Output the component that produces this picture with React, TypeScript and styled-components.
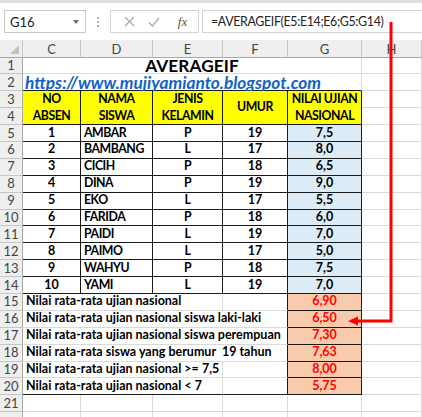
import React from 'react';
import styled, { createGlobalStyle } from 'styled-components';

const GlobalStyle = createGlobalStyle`
  html, body { margin: 0; padding: 0; background: #ffffff; }
  body { font-family: Lato, "Liberation Sans", sans-serif; overflow: hidden; }
  * { box-sizing: border-box; }
`;

const GRID = '#d9d9d9';
const HEAD_LINE = '#c6c6c6';
const BLACK = '#1a1a1a';

const Page = styled.div`
  position: relative;
  width: 422px;
  height: 417px;
  overflow: hidden;
`;

const FormulaBar = styled.div`
  height: 40px;
  border-top: 3px solid #e1e1e1;
  background: #ffffff;
  display: flex;
  align-items: flex-start;
  padding: 7px 0 0 4px;
`;

const NameBox = styled.div`
  width: 82px;
  height: 23px;
  border: 1px solid #c8c8c8;
  display: flex;
  align-items: center;
  justify-content: space-between;
  padding: 0 5px 0 5px;
  font-size: 13px;
  color: #222;
`;

const Caret = styled.span`
  width: 0;
  height: 0;
  border-left: 3.5px solid transparent;
  border-right: 3.5px solid transparent;
  border-top: 4px solid #6b6b6b;
  margin-right: 1px;
`;

const Dots = styled.div`
  width: 24px;
  height: 23px;
  display: flex;
  flex-direction: column;
  align-items: center;
  justify-content: center;
  gap: 2px;
  & > span {
    width: 2px;
    height: 2px;
    background: #b0b0b0;
  }
`;

const FxBox = styled.div`
  width: 89px;
  height: 23px;
  border: 1px solid #d4d4d4;
  display: flex;
  align-items: center;
  justify-content: space-around;
  padding: 0 4px 0 6px;
  color: #a8a8a8;
`;

const FxText = styled.span`
  font-family: "Liberation Serif", serif;
  font-style: italic;
  font-size: 13px;
  color: #555;
  margin-left: 4px;
`;

const FormulaInput = styled.div`
  flex: 1;
  height: 23px;
  margin-left: 3px;
  border: 1px solid #d4d4d4;
  border-right: none;
  display: flex;
  align-items: center;
  padding-left: 8px;
  font-size: 12.4px;
  letter-spacing: -0.35px;
  color: #222;
  white-space: nowrap;
`;

const Sheet = styled.div`
  display: grid;
  grid-template-columns: 23px 58px 72px 70px 65px 74px 60px;
  grid-template-rows: 17.5px repeat(22, 16.9px);
`;

const Corner = styled.div`
  grid-column: 1;
  grid-row: 1;
  background: #efefef;
  border-right: 1px solid ${HEAD_LINE};
  border-bottom: 1px solid #a8a8a8;
  position: relative;
  &::after {
    content: '';
    position: absolute;
    right: 3px;
    bottom: 3px;
    border-left: 9px solid transparent;
    border-bottom: 9px solid #c1c1c1;
  }
`;

const ColHead = styled.div<{ $col: number }>`
  grid-column: ${(p) => p.$col};
  grid-row: 1;
  background: #efefef;
  border-right: 1px solid ${HEAD_LINE};
  border-bottom: 1px solid #a8a8a8;
  display: flex;
  align-items: center;
  justify-content: center;
  font-size: 13px;
  line-height: 1;
  color: #444;
  padding-top: 2px;
`;

const RowHead = styled.div<{ $row: number }>`
  grid-column: 1;
  grid-row: ${(p) => p.$row};
  background: #efefef;
  border-right: 1px solid #a8a8a8;
  border-bottom: 1px solid ${HEAD_LINE};
  display: flex;
  align-items: center;
  justify-content: center;
  font-size: 13px;
  line-height: 1;
  color: #444;
`;

type CellProps = {
  $col: number;
  $row: number;
  $colSpan?: number;
  $rowSpan?: number;
  $bg?: string;
  $rb?: string;
  $bb?: string;
  $align?: 'left' | 'center';
  $color?: string;
  $caps?: boolean;
};

const Cell = styled.div<CellProps>`
  grid-column: ${(p) => p.$col} / span ${(p) => p.$colSpan ?? 1};
  grid-row: ${(p) => p.$row} / span ${(p) => p.$rowSpan ?? 1};
  background: ${(p) => p.$bg ?? '#ffffff'};
  border-right: 1px solid ${(p) => p.$rb ?? GRID};
  border-bottom: 1px solid ${(p) => p.$bb ?? GRID};
  display: flex;
  flex-direction: column;
  align-items: ${(p) => (p.$align === 'left' ? 'flex-start' : 'center')};
  justify-content: center;
  text-align: ${(p) => p.$align ?? 'center'};
  padding: 0 3px;
  font-weight: 700;
  font-size: ${(p) => (p.$caps ? '12.3px' : '12.5px')};
  letter-spacing: ${(p) => (p.$caps ? '-0.45px' : '0')};
  line-height: 16.9px;
  color: ${(p) => p.$color ?? '#000'};
  white-space: pre;
  overflow: visible;
`;

const Title = styled.span`
  font-size: 17.2px;
  line-height: 15px;
  font-weight: 700;
  letter-spacing: 0.1px;
`;

const Link = styled.span`
  font-size: 17.3px;
  line-height: 15px;
  font-style: italic;
  font-weight: 700;
  color: #1162c8;
  margin-left: -1px;
`;

const Arrow = styled.svg`
  position: absolute;
  left: 0;
  top: 0;
  pointer-events: none;
`;

const students: [string, string, string, string, string][] = [
  ['1', 'AMBAR', 'P', '19', '7,5'],
  ['2', 'BAMBANG', 'L', '17', '8,0'],
  ['3', 'CICIH', 'P', '18', '6,5'],
  ['4', 'DINA', 'P', '19', '9,0'],
  ['5', 'EKO', 'L', '17', '5,5'],
  ['6', 'FARIDA', 'P', '18', '6,0'],
  ['7', 'PAIDI', 'L', '19', '7,0'],
  ['8', 'PAIMO', 'L', '17', '5,0'],
  ['9', 'WAHYU', 'P', '18', '7,5'],
  ['10', 'YAMI', 'L', '19', '7,0'],
];

const summary: [string, string, number][] = [
  ['Nilai rata-rata ujian nasional', '6,90', 3],
  ['Nilai rata-rata ujian nasional siswa laki-laki', '6,50', 4],
  ['Nilai rata-rata ujian nasional siswa perempuan', '7,30', 4],
  ['Nilai rata-rata siswa yang berumur  19 tahun', '7,63', 4],
  ['Nilai rata-rata ujian nasional >= 7,5', '8,00', 3],
  ['Nilai rata-rata ujian nasional < 7', '5,75', 3],
];

const headers: [string, number][] = [
  ['NO\nABSEN', 2],
  ['NAMA\nSISWA', 3],
  ['JENIS\nKELAMIN', 4],
  ['UMUR', 5],
  ['NILAI UJIAN\nNASIONAL', 6],
];

const cols = ['C', 'D', 'E', 'F', 'G', 'H'];

export default function App() {
  const cells: React.ReactNode[] = [];
  const gr = (r: number) => r + 1;

  for (let r = 1; r <= 22; r++) {
    cells.push(
      <RowHead key={`rh${r}`} $row={gr(r)}>
        {r <= 21 ? r : ''}
      </RowHead>
    );
    cells.push(<Cell key={`h${r}`} $col={7} $row={gr(r)} />);
  }

  cells.push(
    <Cell key="title" $col={2} $colSpan={5} $row={gr(1)}>
      <Title>AVERAGEIF</Title>
    </Cell>
  );
  cells.push(
    <Cell key="link" $col={2} $colSpan={5} $row={gr(2)} $align="left" $bb={BLACK}>
      <Link>https://www.mujiyamianto.blogspot.com</Link>
    </Cell>
  );
  headers.forEach(([t, c]) =>
    cells.push(
      <Cell key={`hd${c}`} $col={c} $row={gr(3)} $rowSpan={2} $bg="#ffff00" $rb={BLACK} $bb={BLACK} $caps>
        {t}
      </Cell>
    )
  );
  students.forEach((s, i) => {
    const row = gr(5 + i);
    cells.push(
      <Cell key={`a${i}`} $col={2} $row={row} $rb={BLACK} $bb={BLACK}>{s[0]}</Cell>,
      <Cell key={`b${i}`} $col={3} $row={row} $rb={BLACK} $bb={BLACK} $align="left" $caps>{s[1]}</Cell>,
      <Cell key={`c${i}`} $col={4} $row={row} $rb={BLACK} $bb={BLACK} $caps>{s[2]}</Cell>,
      <Cell key={`d${i}`} $col={5} $row={row} $rb={BLACK} $bb={BLACK}>{s[3]}</Cell>,
      <Cell key={`e${i}`} $col={6} $row={row} $rb={BLACK} $bb={BLACK} $bg="#ddebf7">{s[4]}</Cell>
    );
  });
  summary.forEach(([label, val, span], i) => {
    const row = gr(15 + i);
    const last = i === summary.length - 1;
    const bb = last ? BLACK : GRID;
    cells.push(
      <Cell key={`sl${i}`} $col={2} $colSpan={span} $row={row} $align="left" $bb={bb} $rb={span === 4 ? BLACK : GRID}>
        {label}
      </Cell>
    );
    if (span === 3) {
      cells.push(<Cell key={`sf${i}`} $col={5} $row={row} $bb={bb} $rb={BLACK} />);
    }
    cells.push(
      <Cell key={`sv${i}`} $col={6} $row={row} $bg="#f8cbad" $rb={BLACK} $bb={BLACK} $color="#ff0000">
        {val}
      </Cell>
    );
  });
  for (let r = 21; r <= 22; r++) {
    for (let c = 2; c <= 6; c++) {
      cells.push(<Cell key={`e${r}-${c}`} $col={c} $row={gr(r)} />);
    }
  }

  return (
    <Page>
      <GlobalStyle />
      <FormulaBar>
        <NameBox>
          <span>G16</span>
          <Caret />
        </NameBox>
        <Dots>
          <span />
          <span />
          <span />
        </Dots>
        <FxBox>
          <svg width="11" height="11" viewBox="0 0 11 11">
            <path d="M1 1 L10 10 M10 1 L1 10" stroke="#a8a8a8" strokeWidth="1.2" fill="none" />
          </svg>
          <svg width="12" height="10" viewBox="0 0 12 10">
            <path d="M1 5.5 L4.5 9 L11 1" stroke="#a8a8a8" strokeWidth="1.2" fill="none" />
          </svg>
          <FxText>fx</FxText>
        </FxBox>
        <FormulaInput>=AVERAGEIF(E5:E14;E6;G5:G14)</FormulaInput>
      </FormulaBar>
      <Sheet>
        <Corner />
        {cols.map((c, i) => (
          <ColHead key={c} $col={i + 2}>
            {c}
          </ColHead>
        ))}
        {cells}
      </Sheet>
      <Arrow width="422" height="417" viewBox="0 0 422 417">
        <path d="M391 22 L391 321 L356 321" stroke="#ff0000" strokeWidth="3" fill="none" />
        <polygon points="348,321 358,316.5 358,325.5" fill="#ff0000" />
      </Arrow>
    </Page>
  );
}
